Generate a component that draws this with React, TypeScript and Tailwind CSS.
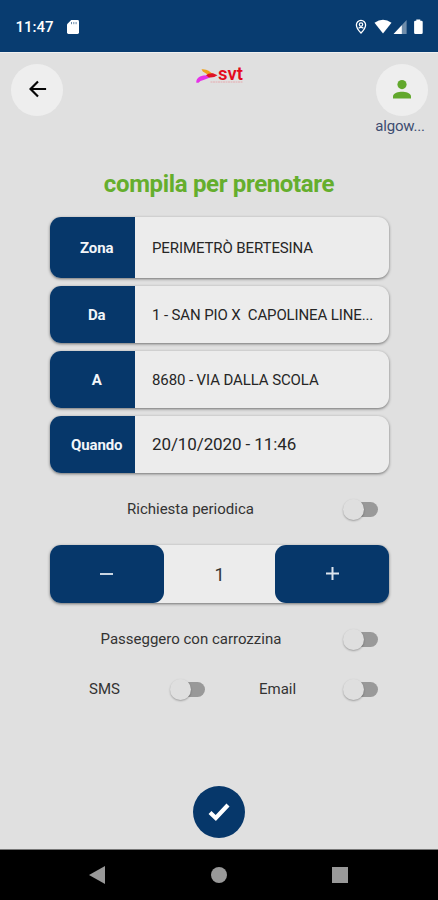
import type { ReactNode } from "react";

function StatusBar() {
  return (
    <header className="flex h-[52px] shrink-0 items-start justify-between bg-[#083c70] pt-[15px] pl-[15.5px] pr-[14px]">
      <div className="flex h-6 items-center">
        <span className="w-[51.5px] pt-px whitespace-nowrap text-[15px] font-medium text-white">11:47</span>
        <svg width="12" height="14" viewBox="0 0 12 14" className="block">
          <path d="M4.2 0H10.6Q12 0 12 1.4V12.6Q12 14 10.6 14H1.4Q0 14 0 12.6V4.2Z" fill="#fff" />
          <path d="M4.5 2V4.200M6.800 2V4.200M9.100 2V4.200" stroke="#083c70" strokeWidth="1" opacity=".6" />
        </svg>
      </div>
      <svg width="70" height="16" viewBox="0 0 70 16" className="mt-1 block">
        <path d="M7 1.4A4.6 4.6 0 0 0 2.400 6C2.400 9.300 7 14 7 14S11.600 9.300 11.600 6A4.600 4.600 0 0 0 7 1.400Z" fill="none" stroke="#fff" strokeWidth="1.300" />
        <circle cx="7" cy="5.600" r="1.700" fill="none" stroke="#fff" strokeWidth="1.200" />
        <path d="M4.500 9.300Q7 7.600 9.500 9.300" fill="none" stroke="#fff" strokeWidth="1.200" />
        <path d="M20.500 3.700Q29 -2.100 37.500 3.700L29 14.400Z" fill="#fff" />
        <path d="M52.600 1V15H39.600Z" fill="#6f8dab" />
        <path d="M47.800 6.200V15H39.600Z" fill="#fff" />
        <path d="M62.300 1.700V.6H66.300V1.700H67.400Q68.700 1.700 68.700 3V13.700Q68.700 15 67.400 15H61.400Q60.100 15 60.100 13.700V3Q60.100 1.700 61.400 1.700Z" fill="#fff" />
      </svg>
    </header>
  );
}

function Logo() {
  return (
    <svg width="50" height="20" viewBox="0 0 50 20" className="mt-[15px] block overflow-visible">
      <path d="M5.500 1.200Q10 .8 12.500 2.800L17 6L12 7Q10 5 6.800 3.500Z" fill="#efa31d" />
      <path d="M.3 14.800Q-.2 11 4 8.600Q8 6.600 16 7.400Q13 10.800 7.500 12Q4 12.800 2.500 14.800Z" fill="#e632e8" />
      <path d="M10 7.200Q12 5 17 5.300L21.500 7.200Q18 10 13 9.500Z" fill="#df1425" />
      <text x="22" y="11.800" textLength="25" lengthAdjust="spacingAndGlyphs" fill="#e30b1b" fontFamily="Roboto, sans-serif" fontWeight="600" fontSize="17.500">svt</text>
      <path d="M14.500 14H46.500" stroke="#e9a0a5" strokeWidth=".8" strokeDasharray="2 .5" />
    </svg>
  );
}

function Field({ label, tall, valueClass, children }: { label: string; tall?: boolean; valueClass: string; children: ReactNode }) {
  return (
    <div className={`flex overflow-hidden rounded-[11px] bg-[#ececec] shadow-[0_1px_3px_rgba(0,0,0,0.5)] ${tall ? "h-[61px] pt-px" : "h-[57px]"}`}>
      <div className={`flex w-[84.5px] shrink-0 items-center justify-center bg-[#06376a] pt-px pl-[9px] text-[15px] font-bold tracking-[-0.1px] text-[#f2f5f9] ${tall ? "-mt-px" : ""}`}>{label}</div>
      <div className={`flex min-w-0 flex-1 items-center whitespace-pre pt-px pl-[17.5px] text-[#262626] ${valueClass}`}>{children}</div>
    </div>
  );
}

function Toggle() {
  return (
    <span className="flex h-[22px] w-9 items-center">
      <span className="z-10 size-[21px] rounded-full bg-[#dfdfdf] shadow-[0_1px_2px_rgba(0,0,0,0.3)]" />
      <span className="ml-[-10px] h-[15px] w-[24px] rounded-full bg-[#999999]" />
    </span>
  );
}

export default function App() {
  return (
    <div className="flex h-[900px] w-[438px] flex-col overflow-hidden bg-[#e0e0e0] font-['Roboto','Liberation_Sans',sans-serif]">
      <StatusBar />
      <div className="flex h-[117px] shrink-0 items-start justify-between border-t border-[#f0f0f0] pl-[11px] pr-[10px]">
        <div className="mt-[11px] flex size-[52px] items-center justify-center rounded-full bg-[#eeeeee]">
          <svg width="18" height="18" viewBox="0 0 20 20" className="mb-[2px] ml-px block">
            <path d="M19 10H2.500M10 1.700L1.700 10L10 18.300" fill="none" stroke="#050505" strokeWidth="2.400" />
          </svg>
        </div>
        <div className="pl-[4px]"><Logo /></div>
        <div className="mt-[11px] flex w-[53px] flex-col items-center">
          <div className="flex size-[52px] items-center justify-center rounded-full bg-[#eeeeee]">
            <svg width="18" height="19" viewBox="0 0 18 19" className="mb-[2px] block">
              <circle cx="9" cy="4.600" r="4.600" fill="#62a82c" />
              <path d="M0 18.500V16.300C0 13 5.500 11.700 9 11.700S18 13 18 16.300V18.500Z" fill="#62a82c" />
            </svg>
          </div>
          <span className="-mt-px mr-[3px] whitespace-nowrap text-[15px] leading-[22px] tracking-[-0.2px] text-[#3d4c70]">algow...</span>
        </div>
      </div>
      <h1 className="h-[47px] shrink-0 text-center text-[24px] leading-[30px] font-bold tracking-[-0.34px] whitespace-nowrap text-[#65ae2d]">compila per prenotare</h1>
      <div className="ml-[50px] flex w-[339px] shrink-0 flex-col gap-2 pt-px">
        <Field label="Zona" tall valueClass="text-[15px] tracking-[-0.1px]">PERIMETRÒ BERTESINA</Field>
        <Field label="Da" valueClass="text-[15px] tracking-[-0.12px]">{"1 - SAN PIO X  CAPOLINEA LINE..."}</Field>
        <Field label="A" valueClass="text-[15px] tracking-[-0.1px]">8680 - VIA DALLA SCOLA</Field>
        <Field label="Quando" valueClass="text-[17px] tracking-[-0.1px]">20/10/2020 - 11:46</Field>
      </div>
      <div className="mt-[25px] flex h-[22px] shrink-0 items-center pl-[127px] text-[15px] text-[#333]">
        <span className="w-[216px]">Richiesta periodica</span><Toggle />
      </div>
      <div className="mt-[25px] ml-[50px] flex h-[58px] w-[339px] shrink-0 rounded-[11px] bg-[#ececec] shadow-[0_1px_3px_rgba(0,0,0,0.5)]">
        <div className="flex w-[114px] items-center justify-center rounded-[11px] bg-[#06376a]">
          <span className="mr-px h-[2.5px] w-[13px] bg-[#c9d5e2]" />
        </div>
        <div className="flex flex-1 items-center justify-center text-[18px] text-[#333]">1</div>
        <div className="flex w-[114px] items-center justify-center rounded-[11px] bg-[#06376a]">
          <svg width="13" height="13" viewBox="0 0 13 13" className="mb-px"><path d="M0 6.500H13M6.500 0V13" stroke="#dce4ed" strokeWidth="2" /></svg>
        </div>
      </div>
      <div className="mt-[25px] flex h-[22px] shrink-0 items-center pl-[100.5px] text-[15px] text-[#333]">
        <span className="w-[242.5px]">Passeggero con carrozzina</span><Toggle />
      </div>
      <div className="mt-[28px] flex h-[22px] shrink-0 items-center pl-[89px] text-[15px] text-[#333]">
        <span className="w-[81px]">SMS</span><Toggle />
        <span className="ml-[53px] w-[84px]">Email</span><Toggle />
      </div>
      <div className="flex flex-1 items-end justify-center pb-[11px]">
        <div className="flex size-[52px] items-center justify-center rounded-full bg-[#06376a]">
          <svg width="22" height="18" viewBox="0 0 22 18" className="block"><path d="M2 9.500L7.800 15L20 2" fill="none" stroke="#fff" strokeWidth="4.200" /></svg>
        </div>
      </div>
      <nav className="flex h-[51px] shrink-0 items-center justify-between border-t border-[#777] bg-black pl-[89px] pr-[90px]">
        <svg width="16" height="18" viewBox="0 0 16 18"><path d="M16 0V18L0 9Z" fill="#999" /></svg>
        <span className="size-4 rounded-full bg-[#999]" />
        <span className="size-4 bg-[#999]" />
      </nav>
    </div>
  );
}
